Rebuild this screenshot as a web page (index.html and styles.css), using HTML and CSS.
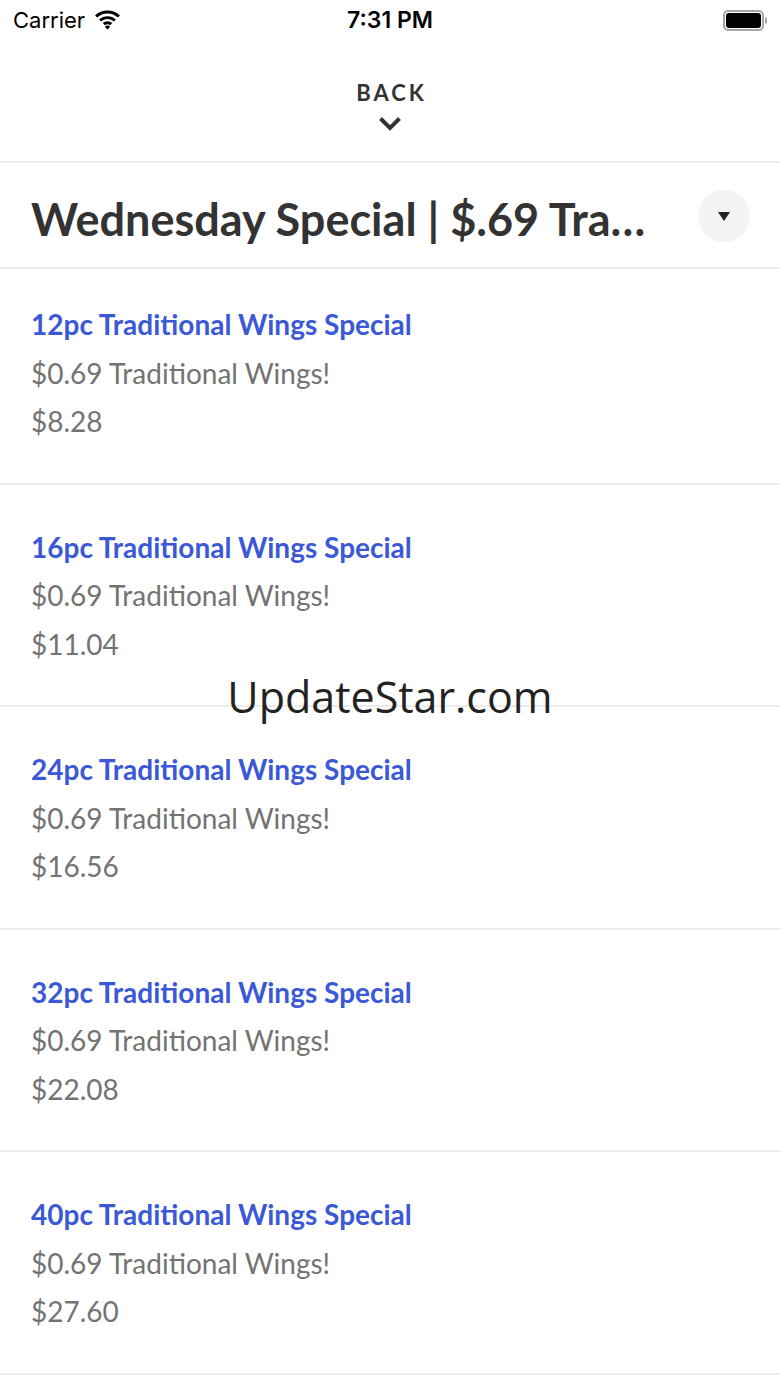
FILE: index.html
```html
<!DOCTYPE html>
<html lang="en">
<head>
    <meta charset="UTF-8">
    <meta name="viewport" content="width=device-width, initial-scale=1.0">
    <title>Wednesday Special</title>
    <link rel="stylesheet" href="styles.css">
</head>
<body>
    <div id="phone">
        <!-- status bar -->
        <div class="status-bar">
            <div class="status-left">
                <span>Carrier</span>
                <svg class="wifi" width="27" height="20" viewBox="0 0 26 19">
                    <path d="M13 3.2c3.9 0 7.4 1.5 10 4l2-2.1C22 2.2 17.7.4 13 .4S4 2.2 1 5.1l2 2.1c2.6-2.5 6.1-4 10-4z" fill="#000"/>
                    <path d="M13 8.6c2.4 0 4.5.9 6.1 2.4l2-2.1C19 7 16.2 5.8 13 5.8S7 7 4.9 8.9l2 2.1c1.6-1.5 3.7-2.4 6.1-2.4z" fill="#000"/>
                    <path d="M13 13.6c1 0 1.9.4 2.5 1l2-2.1c-1.2-1.1-2.8-1.8-4.5-1.8s-3.3.7-4.5 1.8l2 2.1c.6-.6 1.5-1 2.5-1z" fill="#000"/>
                    <path d="M13 18.6l2.6-2.7c-.7-.6-1.6-1-2.6-1s-1.9.4-2.6 1z" fill="#000"/>
                </svg>
            </div>
            <div class="status-time">7:31 PM</div>
            <div class="status-right">
                <div class="battery"><div class="battery-level"></div></div>
                <div class="battery-cap"></div>
            </div>
        </div>

        <!-- back -->
        <div class="back-bar">
            <span class="back-label">BACK</span>
            <svg class="back-chevron" width="24" height="15" viewBox="0 0 24 15">
                <path d="M2.5 2.5l9.5 9.5 9.5-9.5" fill="none" stroke="#333" stroke-width="4"/>
            </svg>
        </div>

        <!-- category header -->
        <div class="category-header">
            <h1 class="category-title">Wednesday Special | $.69 Traditional Wings</h1>
            <button class="category-toggle">
                <svg width="12" height="9" viewBox="0 0 12 9"><path d="M0 0h12L6 9z" fill="#222"/></svg>
            </button>
        </div>

        <!-- menu items -->
        <ul class="menu-list">
            <li class="menu-item">
                <div class="item-name">12pc Traditional Wings Special</div>
                <div class="item-desc">$0.69 Traditional Wings!</div>
                <div class="item-price">$8.28</div>
            </li>
            <li class="menu-item">
                <div class="item-name">16pc Traditional Wings Special</div>
                <div class="item-desc">$0.69 Traditional Wings!</div>
                <div class="item-price">$11.04</div>
            </li>
            <li class="menu-item">
                <div class="item-name">24pc Traditional Wings Special</div>
                <div class="item-desc">$0.69 Traditional Wings!</div>
                <div class="item-price">$16.56</div>
            </li>
            <li class="menu-item">
                <div class="item-name">32pc Traditional Wings Special</div>
                <div class="item-desc">$0.69 Traditional Wings!</div>
                <div class="item-price">$22.08</div>
            </li>
            <li class="menu-item">
                <div class="item-name">40pc Traditional Wings Special</div>
                <div class="item-desc">$0.69 Traditional Wings!</div>
                <div class="item-price">$27.60</div>
            </li>
        </ul>

        <!-- watermark over the list -->
        <div class="watermark">UpdateStar.com</div>
    </div>
</body>
</html>
```

FILE: styles.css
```css
body {
    margin: 0;
    padding: 0;
    background-color: #fff;
    font-family: Lato, "Noto Sans", sans-serif;
    color: #333;
}

#phone {
    position: relative;
    width: 780px;
    height: 1387px;
    overflow: hidden;
}

/* status bar */
.status-bar {
    height: 40px;
    display: flex;
    align-items: center;
    justify-content: space-between;
    padding: 0 13px 0 13px;
    font-family: Inter, Roboto, sans-serif;
    font-size: 22px;
    color: #000;
}

.status-left {
    display: flex;
    align-items: center;
    gap: 9px;
    width: 200px;
}

.status-time {
    font-size: 23px;
    font-weight: 600;
}

.status-right {
    display: flex;
    align-items: center;
    justify-content: flex-end;
    width: 200px;
    gap: 1px;
}

.battery {
    width: 35px;
    height: 15px;
    border: 2px solid #a5a5a5;
    border-radius: 5px;
    padding: 1px;
}

.battery-level {
    width: 100%;
    height: 100%;
    background-color: #000;
    border-radius: 3px;
}

.battery-cap {
    width: 2px;
    height: 7px;
    background-color: #a5a5a5;
    border-radius: 0 2px 2px 0;
}

/* back */
.back-bar {
    height: 123px;
    display: flex;
    flex-direction: column;
    align-items: center;
    padding-top: 37px;
    box-sizing: border-box;
    border-bottom: 2px solid #ececec;
}

.back-label {
    font-size: 22px;
    font-weight: 700;
    letter-spacing: 3px;
    margin-right: -3px;
    line-height: 32px;
    color: #333;
}

.back-chevron {
    margin-top: 7px;
}

/* category header */
.category-header {
    height: 104px;
    display: flex;
    align-items: center;
    padding: 0 30px 0 31px;
    gap: 40px;
    border-bottom: 2px solid #ececec;
}

.category-title {
    flex: 1;
    margin: 0;
    font-size: 45px;
    font-weight: 700;
    color: #333;
    white-space: nowrap;
    overflow: hidden;
    text-overflow: ellipsis;
    padding-top: 8px;
}

.category-toggle {
    width: 52px;
    height: 52px;
    border-radius: 50%;
    border: none;
    background-color: #f3f3f3;
    display: flex;
    align-items: center;
    justify-content: center;
    padding: 0;
    margin-top: 2px;
}

/* menu list */
.menu-list {
    list-style-type: none;
    margin: 0;
    padding: 0;
}

.menu-item {
    padding: 38px 31px 37px;
    border-bottom: 2px solid #ececec;
    line-height: 48.5px;
}

.menu-item:first-child {
    padding-top: 31px;
}

.item-name {
    font-size: 28px;
    font-weight: 700;
    color: #3b58d6;
}

.item-desc,
.item-price {
    font-size: 28px;
    color: #737373;
}

.watermark {
    position: absolute;
    top: 670px;
    left: 0;
    right: 0;
    text-align: center;
    font-family: "Open Sans", "Noto Sans", sans-serif;
    font-size: 43px;
    color: #222;
    line-height: 54px;
}
```
